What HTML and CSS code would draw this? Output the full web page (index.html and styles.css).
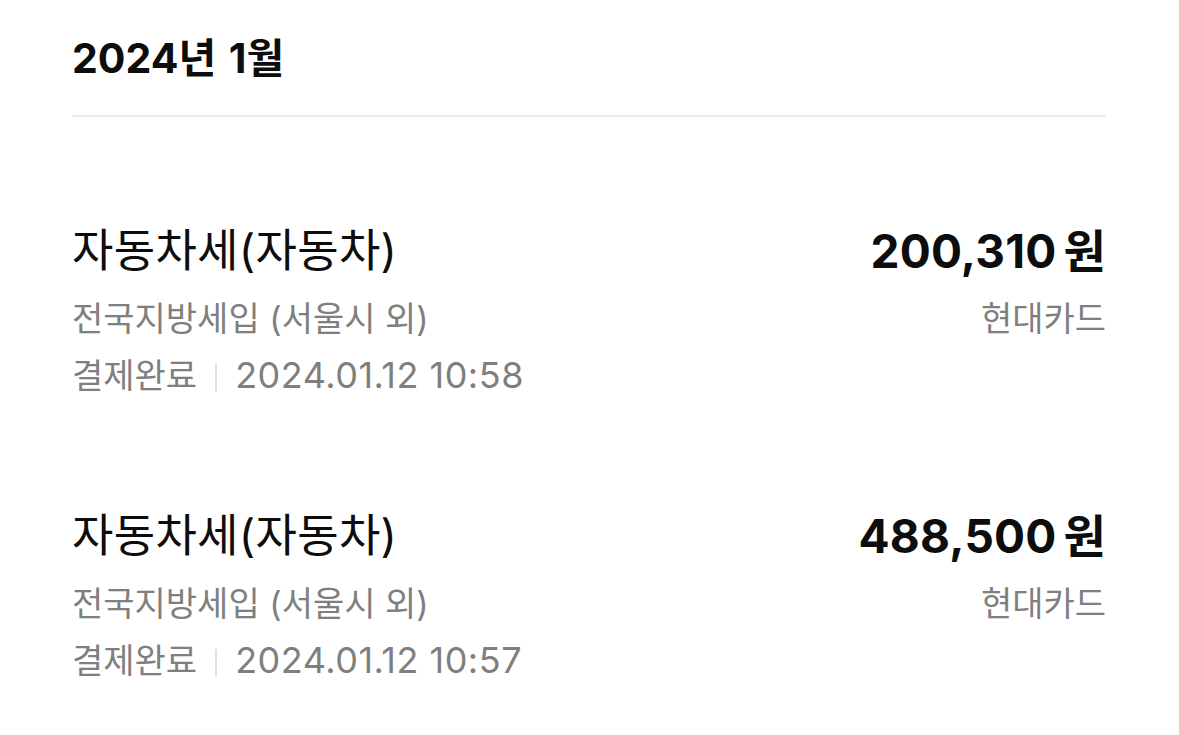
FILE: index.html
```html
<!DOCTYPE html>
<html lang="ko">
   <head>
      <title>납부내역</title>
      <link rel="stylesheet" href="styles.css">
   </head>
   <body>
   <div class="page">
      <h1 class="month">2024년 1월</h1>
      <hr class="divider">

      <div class="item">
         <div class="row">
            <span class="title">자동차세(자동차)</span>
            <span class="amount">200,310<span class="won">원</span></span>
         </div>
         <div class="row sub">
            <span>전국지방세입 (서울시 외)</span>
            <span>현대카드</span>
         </div>
         <div class="row sub">
            <span>결제완료<i class="bar"></i><span class="date">2024.01.12 10:58</span></span>
         </div>
      </div>

      <div class="item">
         <div class="row">
            <span class="title">자동차세(자동차)</span>
            <span class="amount">488,500<span class="won">원</span></span>
         </div>
         <div class="row sub">
            <span>전국지방세입 (서울시 외)</span>
            <span>현대카드</span>
         </div>
         <div class="row sub">
            <span>결제완료<i class="bar"></i><span class="date">2024.01.12 10:57</span></span>
         </div>
      </div>
   </div>
   </body>
</html>
```

FILE: styles.css
```css
body { margin:0; background:#fff; font-family:Inter,"Noto Sans CJK KR",sans-serif; color:#0d0d0d; }
.page { padding:0 73px 0 72px; }
.month { margin:0; padding-top:32px; font-size:41px; font-weight:700; line-height:52px; letter-spacing:0; word-spacing:3px; }
.divider { border:0; height:2px; background:#ebebeb; margin:31px 0 0; }
.item { padding-top:104px; }
.item + .item { padding-top:102px; }
.row { display:flex; justify-content:space-between; align-items:center; }
.title { font-size:45px; line-height:60px; letter-spacing:0.3px; }
.amount { font-size:46px; font-weight:700; line-height:60px; letter-spacing:0.2px; }
.won { margin-left:7px; }
.sub { font-size:34px; line-height:56px; color:#7f7f7f; letter-spacing:0; }
.item .row:first-child + .sub { margin-top:10px; }
.date { font-size:36px; letter-spacing:0.5px; }
.bar { display:inline-block; width:2px; height:28px; background:#e0e0e0; margin:0 18px 0 18px; vertical-align:-4px; }
```
